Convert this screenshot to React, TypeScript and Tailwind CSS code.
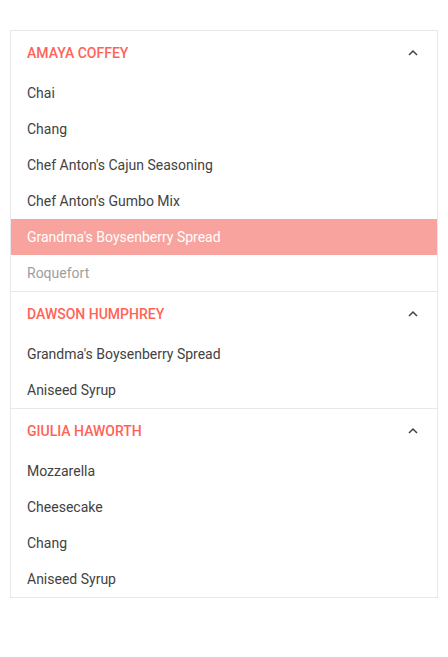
import React from 'react';

interface Item {
	name: string;
	selected?: boolean;
	disabled?: boolean;
}

interface Group {
	title: string;
	items: Item[];
}

const groups: Group[] = [
	{
		title: 'AMAYA COFFEY',
		items: [
			{ name: 'Chai' },
			{ name: 'Chang' },
			{ name: "Chef Anton's Cajun Seasoning" },
			{ name: "Chef Anton's Gumbo Mix" },
			{ name: "Grandma's Boysenberry Spread", selected: true },
			{ name: 'Roquefort', disabled: true }
		]
	},
	{
		title: 'DAWSON HUMPHREY',
		items: [{ name: "Grandma's Boysenberry Spread" }, { name: 'Aniseed Syrup' }]
	},
	{
		title: 'GIULIA HAWORTH',
		items: [
			{ name: 'Mozzarella' },
			{ name: 'Cheesecake' },
			{ name: 'Chang' },
			{ name: 'Aniseed Syrup' }
		]
	}
];

const ChevronUp: React.FC = () => (
	<svg width="16" height="16" viewBox="0 0 16 16" fill="none">
		<path d="M4 10 L8 6 L12 10" stroke="#424242" strokeWidth="1.5" />
	</svg>
);

const App: React.FC = () => {
	return (
		<div className="bg-white min-h-[657px] pt-[30px] px-[10px]" style={{ fontFamily: 'Roboto, "Liberation Sans", sans-serif' }}>
			<div className="border border-[#e8e8e8] text-[14px]">
				{groups.map((group, gi) => (
					<div key={group.title} className={gi > 0 ? 'border-t border-[#e8e8e8]' : ''}>
						<div className="h-[44px] flex items-center justify-between pl-4 pr-4">
							<span className="font-medium text-[#ff6358]">{group.title}</span>
							<ChevronUp />
						</div>
						{group.items.map((item, ii) => (
							<div
								key={ii}
								className={
									'h-9 flex items-center px-4 ' +
									(item.selected
										? 'bg-[#f8a39e] text-white'
										: item.disabled
										? 'text-[#9e9e9e]'
										: 'text-[#424242]')
								}
							>
								{item.name}
							</div>
						))}
					</div>
				))}
			</div>
		</div>
	);
};

export default App;
